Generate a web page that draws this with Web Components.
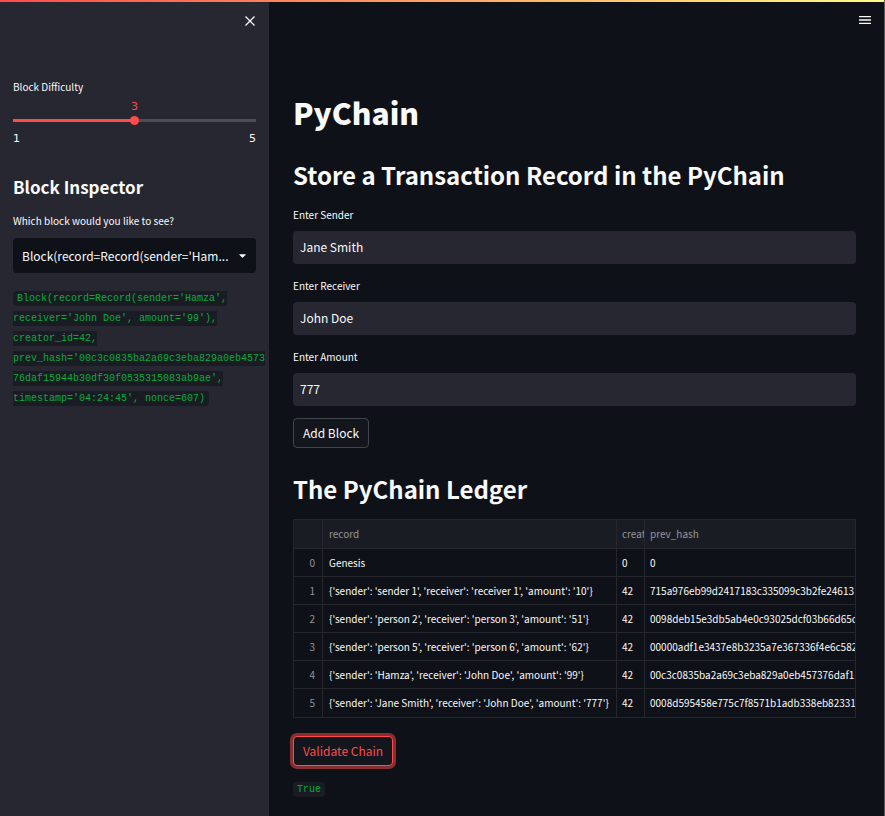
<!DOCTYPE html>
<html lang="en">
<head>
<meta charset="utf-8">
<meta name="viewport" content="width=device-width, initial-scale=1">
<title>PyChain</title>
<style>
  :root {
    --bg: #0e1117;
    --panel: #262730;
    --text: #fafafa;
    --accent: #ff4b4b;
    --code-bg: #1a1c24;
    --code: #09ab3b;
    --mono: "Liberation Mono", monospace;
  }
  body {
    margin: 0;
    background: var(--bg);
    color: var(--text);
    font-family: "Noto Sans CJK SC", "Noto Sans", sans-serif;
    font-size: 12px;
    line-height: 20px;
  }
</style>
</head>
<body>
<app-shell>
  <side-panel slot="side">
    <range-field label="Block Difficulty" min="1" max="5" value="3"></range-field>
    <section-title level="3">Block Inspector</section-title>
    <select-field label="Which block would you like to see?" value="Block(record=Record(sender='Ham..."></select-field>
    <code-chip>Block(record=Record(sender='Hamza',<br>receiver='John Doe', amount='99'),<br>creator_id=42,<br>prev_hash='00c3c0835ba2a69c3eba829a0eb4573<br>76daf15944b30df30f0535315083ab9ae',<br>timestamp='04:24:45', nonce=607)</code-chip>
  </side-panel>
  <section-title level="1">PyChain</section-title>
  <section-title level="2">Store a Transaction Record in the PyChain</section-title>
  <text-field label="Enter Sender" value="Jane Smith"></text-field>
  <text-field label="Enter Receiver" value="John Doe"></text-field>
  <text-field label="Enter Amount" value="777"></text-field>
  <action-button>Add Block</action-button>
  <section-title level="2" class="ledger">The PyChain Ledger</section-title>
  <ledger-table></ledger-table>
  <action-button active>Validate Chain</action-button>
  <code-chip>True</code-chip>
</app-shell>

<script>
const define = (name, render) => customElements.define(name, class extends HTMLElement {
  connectedCallback() {
    if (this.shadowRoot) return;
    this.attachShadow({ mode: "open" }).innerHTML = render(this);
  }
});

define("app-shell", () => `
  <style>
    :host { display: flex; flex-direction: column; min-height: 100vh; box-sizing: border-box; border-right: 1px solid #5a5c61; }
    .bar { height: 2px; background: linear-gradient(90deg, #ff4b4b, #fffd80); }
    .body { flex: 1; display: grid; grid-template-columns: 269px minmax(0, 1fr); }
    main { position: relative; padding: 86px 28px 12px 24px; }
    .menu { position: absolute; top: 8px; right: 8px; padding: 4px; border: 0; background: none; color: inherit; line-height: 0; }
  </style>
  <div class="bar"></div>
  <div class="body">
    <slot name="side"></slot>
    <main>
      <button class="menu" aria-label="Menu">
        <svg width="14" height="12" viewBox="0 0 14 12" stroke="currentColor" stroke-width="1.3"><path d="M1 2.6H13M1 6H13M1 9.4H13"/></svg>
      </button>
      <slot></slot>
    </main>
  </div>`);

define("side-panel", () => `
  <style>
    :host { display: block; background: var(--panel); padding: 12px 13px; }
    header { display: flex; justify-content: flex-end; height: 63px; }
    button { width: 12px; height: 14px; padding: 0; border: 0; background: none; color: inherit; line-height: 0; }
  </style>
  <header><button aria-label="Close">
    <svg width="12" height="14" viewBox="0 0 12 14" fill="none" stroke="currentColor" stroke-width="1.3"><path d="M1.5 2.5L10.5 11.5M10.5 2.5L1.5 11.5"/></svg>
  </button></header>
  <slot></slot>`);

define("section-title", el => {
  const n = el.getAttribute("level");
  return `
  <style>
    :host { display: block; }
    :host(.ledger) { margin-top: 23px; }
    h1, h2, h3 { margin: 0; white-space: nowrap; }
    h1 { font-size: 30px; line-height: 48px; font-weight: 800; padding-bottom: 21px; }
    h2 { font-size: 24px; line-height: 36px; font-weight: 600; padding-bottom: 12px; }
    h3 { font-size: 17px; line-height: 24px; font-weight: 600; padding: 26px 0 12px; }
  </style>
  <h${n}><slot></slot></h${n}>`;
});

define("range-field", el => {
  const [min, max, value] = ["min", "max", "value"].map(k => el.getAttribute(k));
  return `
  <style>
    :host { display: block; }
    label { display: block; font-size: 10px; line-height: 20px; }
    output { display: block; text-align: center; color: var(--accent); font: 11px/19px "DejaVu Sans", sans-serif; }
    input { display: block; appearance: none; width: 100%; height: 9px; margin: 0; background: linear-gradient(90deg, var(--accent) 50%, #4b4c57 50%) center / 100% 3px no-repeat; }
    input::-webkit-slider-thumb { appearance: none; width: 9px; height: 9px; border-radius: 50%; background: var(--accent); }
    .ends { display: flex; justify-content: space-between; padding-top: 4px; font: 11px/20px "DejaVu Sans", sans-serif; }
  </style>
  <label for="r">${el.getAttribute("label")}</label>
  <output for="r">${value}</output>
  <input id="r" type="range" min="${min}" max="${max}" value="${value}">
  <div class="ends"><span>${min}</span><span>${max}</span></div>`;
});

define("select-field", el => `
  <style>
    :host { display: block; margin-bottom: 16px; }
    label { display: block; font-size: 10px; line-height: 20px; padding-bottom: 7px; }
    .box { display: grid; align-items: center; }
    select, svg { grid-area: 1 / 1; }
    select { appearance: none; width: 100%; height: 35px; padding: 0 24px 0 9px; border: 0; border-radius: 4px; background: var(--bg); color: inherit; font: inherit; }
    svg { justify-self: end; margin-right: 10px; pointer-events: none; }
  </style>
  <label for="s">${el.getAttribute("label")}</label>
  <div class="box">
    <select id="s"><option>${el.getAttribute("value")}</option></select>
    <svg width="7" height="4" viewBox="0 0 7 4" fill="currentColor"><path d="M.5 .2H6.5Q6.9 .4 6.5 .9L3.9 3.5Q3.5 3.8 3.1 3.5L.5 .9Q.1 .4 .5 .2Z"/></svg>
  </div>`);

define("text-field", el => `
  <style>
    :host { display: block; margin-bottom: 12px; }
    label { display: block; font-size: 10px; line-height: 20px; padding-bottom: 6px; }
    input { display: block; box-sizing: border-box; width: 100%; height: 33px; padding: 0 7px 2px; border: 0; border-radius: 4px; background: var(--panel); color: inherit; font: inherit; }
  </style>
  <label for="i">${el.getAttribute("label")}</label>
  <input id="i" type="text" value="${el.getAttribute("value")}">`);

define("action-button", () => `
  <style>
    :host { display: block; }
    button { height: 30px; padding: 0 9px; border: 1px solid #41444c; border-radius: 4px; background: #13161d; color: inherit; font: inherit; }
    :host([active]) button { border-color: var(--accent); color: var(--accent); box-shadow: 0 0 0 3px #ff4b4b80; }
  </style>
  <button type="button"><slot></slot></button>`);

define("code-chip", () => `
  <style>
    :host { display: block; margin-top: 14px; font: 10px/20px var(--mono); white-space: nowrap; }
    code { font: inherit; padding: 2px 4px; border-radius: 4px; background: var(--code-bg); color: var(--code); }
  </style>
  <code><slot></slot></code>`);

const rows = [
  ["Genesis", "0", "0"],
  ["{'sender': 'sender 1', 'receiver': 'receiver 1', 'amount': '10'}", "42", "715a976eb99d2417183c335099c3b2fe24613"],
  ["{'sender': 'person 2', 'receiver': 'person 3', 'amount': '51'}", "42", "0098deb15e3db5ab4e0c93025dcf03b66d65c"],
  ["{'sender': 'person 5', 'receiver': 'person 6', 'amount': '62'}", "42", "00000adf1e3437e8b3235a7e367336f4e6c582"],
  ["{'sender': 'Hamza', 'receiver': 'John Doe', 'amount': '99'}", "42", "00c3c0835ba2a69c3eba829a0eb457376daf1"],
  ["{'sender': 'Jane Smith', 'receiver': 'John Doe', 'amount': '777'}", "42", "0008d595458e775c7f8571b1adb338eb82331"]
];

define("ledger-table", () => `
  <style>
    :host { display: block; margin-bottom: 18px; border: 1px solid #25272d; overflow: hidden; }
    table { width: 100%; table-layout: fixed; border-spacing: 0; font-size: 10px; line-height: 20px; }
    .n { width: 29px; } .r { width: 294px; } .c { width: 28px; }
    th, td { box-sizing: border-box; height: 28px; padding: 0 0 0 6px; text-align: left; white-space: nowrap; overflow: hidden; border-right: 1px solid #25272d; border-bottom: 1px solid #25272d; }
    td:nth-child(n+3), th:nth-child(n+3) { padding-left: 5px; }
    thead th { height: 29px; background: var(--code-bg); }
    th { color: #93959b; font-weight: 400; }
    tbody th { text-align: right; padding: 0 7px 0 0; }
    tr > :last-child { border-right: 0; }
    tbody tr:last-child > * { border-bottom: 0; }
  </style>
  <table>
    <colgroup><col class="n"><col class="r"><col class="c"><col></colgroup>
    <thead><tr><th></th><th>record</th><th>creat</th><th>prev_hash</th></tr></thead>
    <tbody>${rows.map((r, i) => `<tr><th>${i}</th>${r.map(c => `<td>${c}</td>`).join("")}</tr>`).join("")}</tbody>
  </table>`);
</script>
</body>
</html>
